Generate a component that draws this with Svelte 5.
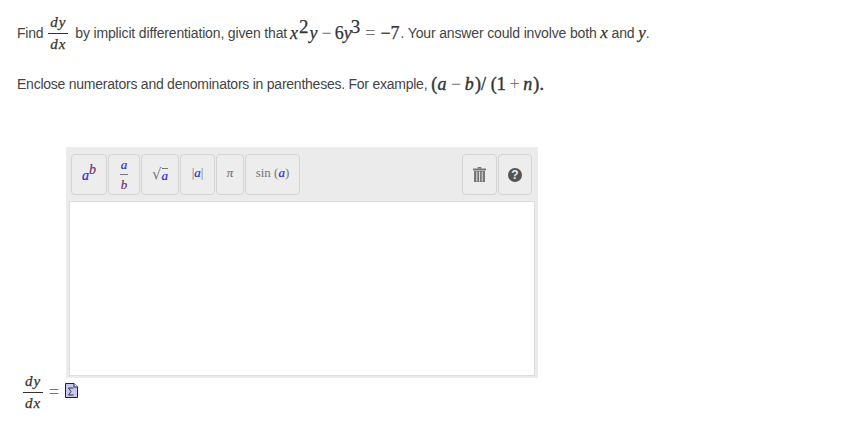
<script>
  const tools = [
    { id: 'sup', width: 36 },
    { id: 'frac', width: 32 },
    { id: 'sqrt', width: 38 },
    { id: 'abs', width: 35 },
    { id: 'pi', width: 28 },
    { id: 'sin', width: 55 }
  ];
</script>

<main class="page">
  <p class="line first">
    <span>Find</span>
    <span class="frac small"><span class="num">dy</span><span class="den">dx</span></span>
    <span class="by">by implicit differentiation, given that</span>
    <span class="math eq"><i>x</i><sup>2</sup><i class="y1">y</i><b class="op first-op">&minus;</b>6<i>y</i><sup class="s3">3</sup><b class="op">=</b>&minus;7</span><span class="rest">. Your answer could involve both <i class="math var">x</i> and <i class="math var">y</i>.</span>
  </p>

  <p class="line second">
    <span>Enclose numerators and denominators in parentheses. For example,</span>
    <span class="math example">(<i>a</i><b class="op">&minus;</b><i>b</i>)/ (1<b class="op">+</b><i>n</i>).</span>
  </p>

  <section class="editor">
    <div class="toolbar">
      {#each tools as tool}
        <button class="tool" style="width: {tool.width}px">
          {#if tool.id === 'sup'}
            <span class="t-sup"><i class="blue">a</i><sup class="purple">b</sup></span>
          {:else if tool.id === 'frac'}
            <span class="t-frac"><i class="blue">a</i><i class="purple">b</i></span>
          {:else if tool.id === 'sqrt'}
            <span class="t-sqrt"><span class="radical">√</span><i class="blue over">a</i></span>
          {:else if tool.id === 'abs'}
            <span class="t-plain">|<i class="blue">a</i>|</span>
          {:else if tool.id === 'pi'}
            <span class="t-plain"><i class="pi">π</i></span>
          {:else}
            <span class="t-plain">sin (<i class="blue">a</i>)</span>
          {/if}
        </button>
      {/each}
      <button class="tool end" style="width: 35px" aria-label="Delete">
        <svg width="13" height="15" viewBox="0 0 13 15">
          <path d="M0 1.500h13v2h-13z" fill="#777" />
          <path d="M4 1.500 5 0h3l1 1.500z" fill="#777" />
          <path d="M1 4h11v11h-11z" fill="#777" />
          <path d="M3.800 4.500v10M6.500 4.500v10M9.200 4.500v10" stroke="#ddd" stroke-width="1" />
        </svg>
      </button>
      <button class="tool" style="width: 34px" aria-label="Help">
        <span class="help">?</span>
      </button>
    </div>
    <div class="area"></div>
  </section>

  <div class="answer">
    <span class="frac big"><span class="num">dy</span><span class="den">dx</span></span>
    <span class="equals">=</span>
    <svg class="placeholder" width="13" height="15" viewBox="0 0 13 15">
      <path d="M0.500 0.500h8.500l3.500 3.500v10.500h-12z" fill="#c8c8f0" stroke="#222" />
      <path d="M9 0.500v3.500h3.500" fill="#fff" stroke="#222" />
      <path d="M8.500 5h-5l2.500 3.500-2.500 3.500h5" fill="none" stroke="#334" />
    </svg>
  </div>
</main>

<style>
  :global(body) {
    margin: 0;
    background: #fff;
  }

  .page {
    padding: 0 0 0 17px;
    font-family: "Liberation Sans", Arial, sans-serif;
    font-size: 14px;
    letter-spacing: -0.24px;
    color: #444;
  }

  p {
    margin: 0;
  }

  .line {
    display: flex;
    align-items: center;
    white-space: nowrap;
  }

  .first {
    height: 38px;
    padding-top: 14px;
  }

  .second {
    height: 34px;
    margin-top: 15px;
  }

  .by {
    margin-left: 7px;
    letter-spacing: -0.15px;
  }

  .rest {
    margin-left: 1px;
    letter-spacing: -0.15px;
  }

  .math,
  .frac {
    font-family: "Liberation Serif", serif;
    letter-spacing: 0;
    -webkit-text-stroke: 0.25px;
  }

  .math {
    color: #333;
    font-size: 18px;
  }

  .math i {
    margin-right: 1px;
  }

  .eq {
    margin-left: 3px;
  }

  .var {
    font-size: 17px;
  }

  .op {
    display: inline-block;
    margin: 0 5px;
    font-weight: normal;
    color: #777;
    -webkit-text-stroke: 0;
  }

  .first-op {
    margin-right: 3px;
  }

  .math sup {
    font-size: 19px;
    font-style: normal;
    line-height: 0;
    vertical-align: 6px;
  }

  .math .y1 {
    margin-left: 1px;
    margin-right: -1px;
  }

  .s3 {
    margin-left: -2px;
  }

  .example {
    margin-left: 4px;
    font-size: 18px;
    letter-spacing: 0.1px;
    -webkit-text-stroke: 0.4px;
  }

  .example .op {
    margin: 0 3.5px;
  }

  .frac {
    display: inline-flex;
    flex-direction: column;
    align-items: center;
    font-style: italic;
    color: #333;
    line-height: 1;
    letter-spacing: 1px;
  }

  .frac .num {
    align-self: stretch;
    text-align: center;
    border-bottom: 1px solid #333;
    padding-bottom: 3px;
  }

  .frac .den {
    padding-top: 3px;
  }

  .small {
    width: 20px;
    margin-left: 5px;
    font-size: 15px;
  }

  .editor {
    box-sizing: border-box;
    width: 472px;
    height: 231px;
    margin: 46px 0 0 49px;
    padding: 7px 3px 2px;
    background: #ebebeb;
    display: flex;
    flex-direction: column;
    gap: 6px;
  }

  .toolbar {
    display: flex;
    gap: 1px;
    padding: 0 3px 0 2px;
  }

  .tool {
    box-sizing: border-box;
    height: 41px;
    padding: 0;
    border: 1px solid #d4d4d4;
    border-radius: 4px;
    background: #ededed;
    display: flex;
    align-items: center;
    justify-content: center;
    color: #777;
    font-size: 12px;
    letter-spacing: 0;
  }

  .end {
    margin-left: auto;
  }

  .blue {
    color: #2b2bd8;
  }

  .purple {
    color: #70307a;
  }

  .tool i {
    font-family: "Liberation Serif", serif;
    font-size: 13px;
    -webkit-text-stroke: 0.2px;
  }

  .t-sup {
    font-family: "Liberation Serif", serif;
    margin-top: 3px;
  }

  .t-sup .blue {
    font-size: 14px;
  }

  .t-sup sup {
    font-style: italic;
    font-size: 14px;
    line-height: 0;
    vertical-align: 6px;
    -webkit-text-stroke: 0.2px;
  }

  .t-frac {
    display: flex;
    flex-direction: column;
    align-items: center;
    line-height: 1;
  }

  .t-frac i:first-child {
    border-bottom: 1px solid #777;
    padding: 0 1px 3px;
    margin-bottom: 3px;
  }

  .t-sqrt {
    display: flex;
    align-items: flex-end;
    font-family: "DejaVu Serif", serif;
  }

  .radical {
    font-size: 15px;
    line-height: 1;
  }

  .over {
    border-top: 1px solid #777;
    line-height: 13px;
  }

  .t-plain {
    font-family: "Liberation Serif", serif;
    font-size: 13px;
    margin-top: -3px;
  }

  .pi {
    color: #777;
  }

  .help {
    width: 14px;
    height: 14px;
    border-radius: 50%;
    background: #555;
    color: #eee;
    font-size: 12px;
    font-weight: bold;
    line-height: 14px;
    text-align: center;
  }

  .area {
    flex: 1;
    background: #fff;
    border: 1px solid #ddd;
  }

  .answer {
    display: flex;
    align-items: center;
    height: 35px;
    margin-top: -3px;
    padding-left: 6px;
  }

  .big {
    width: 20px;
    font-size: 15px;
  }

  .equals {
    margin: 0 6px;
    font-family: "Liberation Serif", serif;
    font-size: 18px;
    color: #777;
  }

  .placeholder {
    margin-bottom: 5px;
  }
</style>
